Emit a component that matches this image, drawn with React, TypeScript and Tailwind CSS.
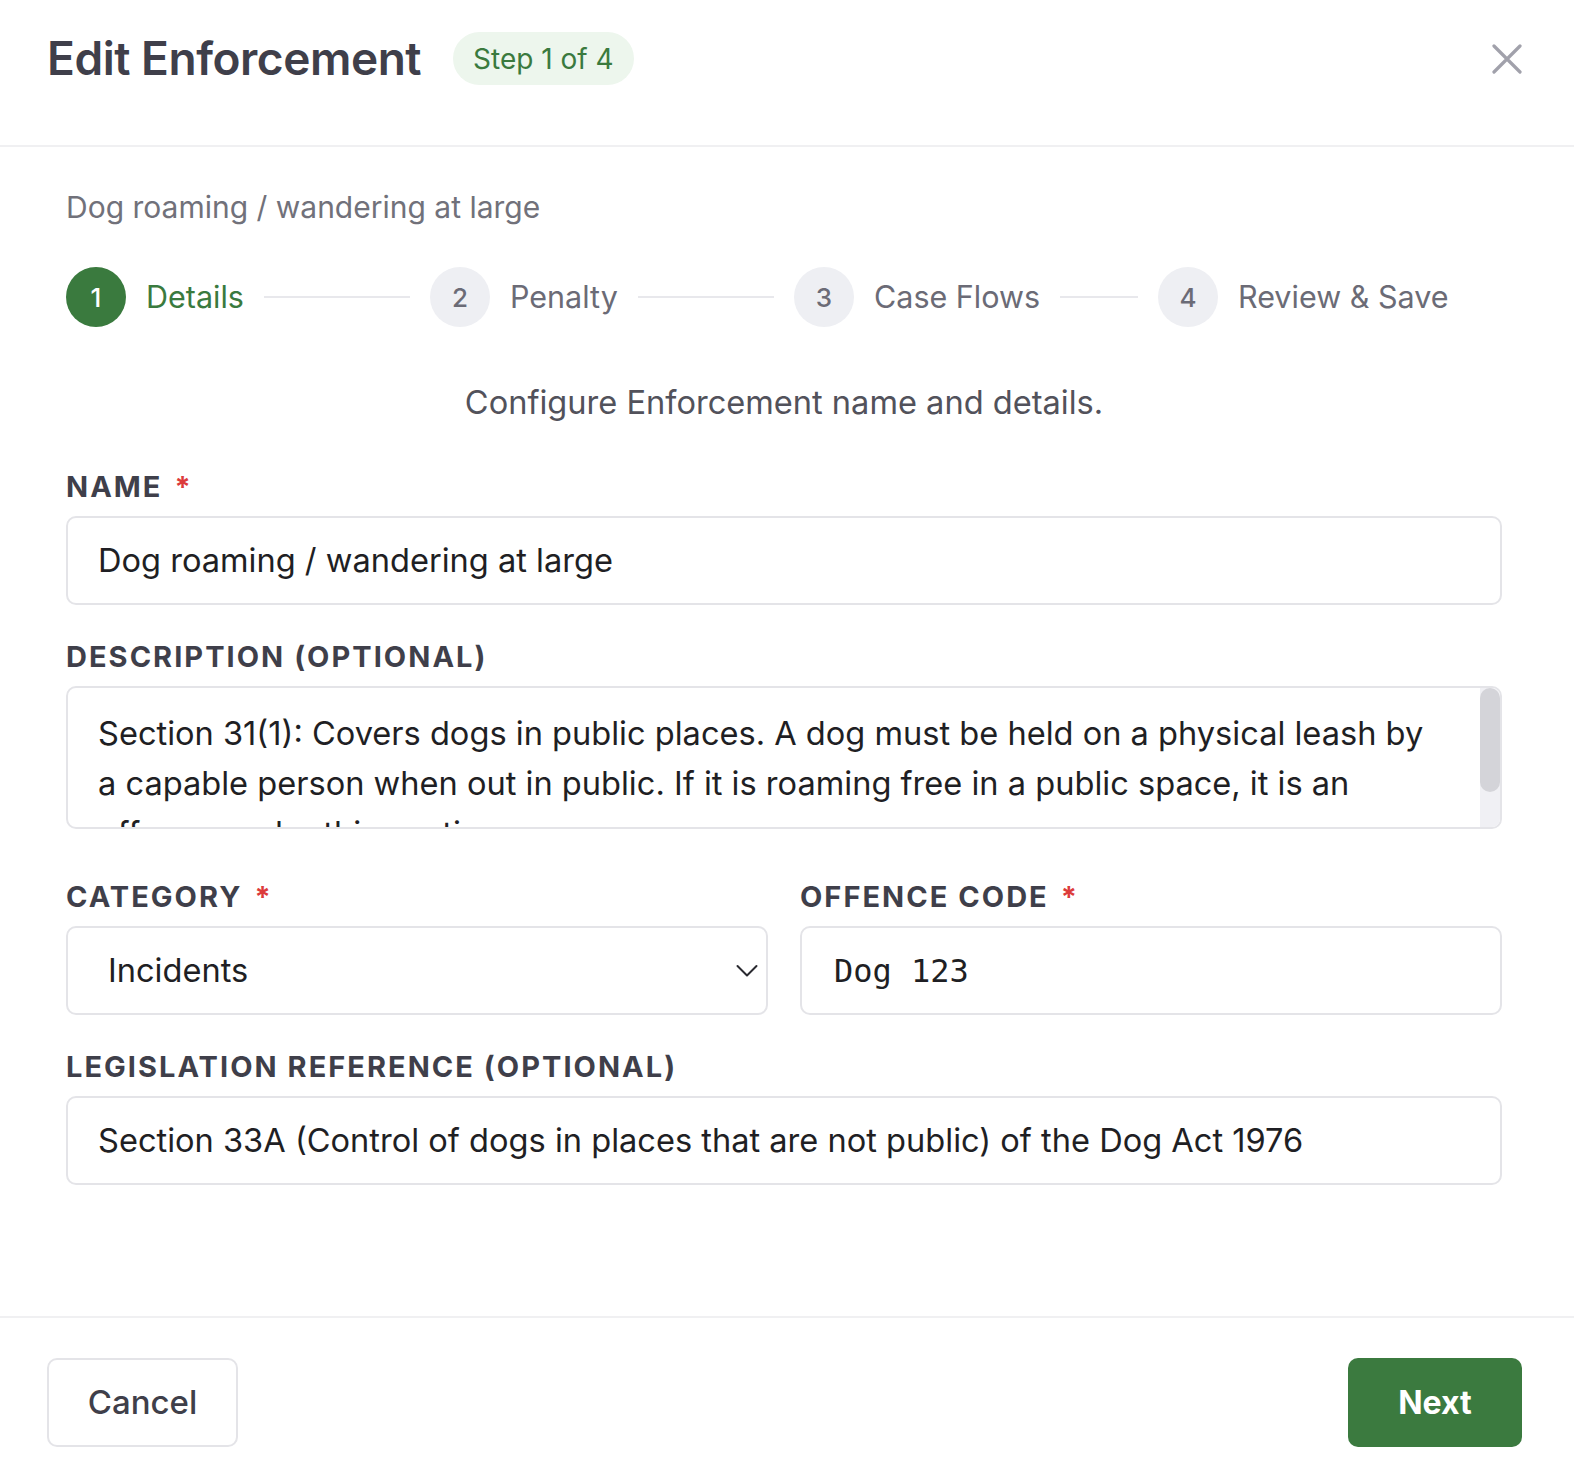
const steps = [
  { n: 1, label: "Details" },
  { n: 2, label: "Penalty" },
  { n: 3, label: "Case Flows" },
  { n: 4, label: "Review & Save" },
];

const descLines = [
  "Section 31(1): Covers dogs in public places. A dog must be held on a physical leash by",
  "a capable person when out in public. If it is roaming free in a public space, it is an",
  "offence under this section.",
];

const FieldLabel = ({ text, required }: { text: string; required?: boolean }) => (
  <div className="h-[36px] flex items-center text-[29px] font-bold tracking-[0.07em] text-[#3f3f4a] uppercase">
    {text}
    {required && <span className="ml-3 text-[#dc3b3b]">*</span>}
  </div>
);

const App = () => {
  return (
    <div
      className="w-[1574px] h-[1480px] flex flex-col bg-white"
      style={{ fontFamily: "Inter, 'Noto Sans', sans-serif" }}
    >
      {/* header */}
      <div className="h-[147px] shrink-0 flex items-center pl-[47px] pr-[52px] border-b-2 border-[#f0f0f2]">
        <div className="text-[46px] font-semibold text-[#3f3f4a] tracking-[-0.01em] -mt-[28px]">Edit Enforcement</div>
        <div className="ml-[32px] -mt-[28px] h-[53px] px-[20px] rounded-full bg-[#edf6ed] text-[#3a7a3e] text-[28px] flex items-center">
          Step 1 of 4
        </div>
        <div className="ml-auto -mt-[28px]">
          <svg width="30" height="30" viewBox="0 0 30 30" fill="none" stroke="#a1a1ab" strokeWidth="3.2" strokeLinecap="round">
            <path d="M2 2 L28 28 M28 2 L2 28" />
          </svg>
        </div>
      </div>

      {/* body */}
      <div className="flex-1 pl-[66px] pr-[72px]">
        <div className="mt-[40px] h-[40px] flex items-center text-[30px] text-[#71717a]">
          Dog roaming / wandering at large
        </div>

        <div className="mt-[40px] h-[60px] flex gap-5">
          {steps.map((s, i) => {
            const active = i === 0;
            return (
              <div key={s.n} className="flex-1 flex items-center">
                <div
                  className={
                    active
                      ? "w-[60px] h-[60px] shrink-0 rounded-full bg-[#3a7a3e] text-white text-[26px] font-medium flex items-center justify-center"
                      : "w-[60px] h-[60px] shrink-0 rounded-full bg-[#eeeff3] text-[#6b6b76] text-[26px] font-medium flex items-center justify-center"
                  }
                >
                  {s.n}
                </div>
                <div
                  className={
                    active
                      ? "ml-5 text-[30.5px] text-[#3a7a3e] whitespace-nowrap"
                      : "ml-5 text-[30.5px] text-[#6b6b76] whitespace-nowrap"
                  }
                >
                  {s.label}
                </div>
                {i < steps.length - 1 && <div className="ml-5 flex-1 h-[2px] bg-[#e8e8ec]" />}
              </div>
            );
          })}
        </div>

        <div className="mt-[55px] h-[40px] flex items-center justify-center text-[32.6px] text-[#52525b]">
          Configure Enforcement name and details.
        </div>

        <div className="mt-[47px]">
          <FieldLabel text="Name" required />
        </div>
        <div className="mt-[11px] h-[89px] border-2 border-[#e4e4e8] rounded-[10px] flex items-center px-[30px] text-[32.6px] text-[#1f1f24]">
          Dog roaming / wandering at large
        </div>

        <div className="mt-[34px]">
          <FieldLabel text="Description (Optional)" />
        </div>
        <div className="mt-[11px] h-[143px] border-2 border-[#e4e4e8] rounded-[10px] flex overflow-hidden">
          <div className="flex-1 pl-[30px] pt-[20px] text-[32.6px] leading-[50px] text-[#1f1f24] whitespace-nowrap overflow-hidden">
            {descLines.map((l, i) => (
              <div key={i}>{l}</div>
            ))}
          </div>
          <div className="w-[20px] shrink-0 bg-[#f0f0f4]">
            <div className="h-[104px] bg-[#d4d4d9] rounded-full" />
          </div>
        </div>

        <div className="mt-[50px] grid grid-cols-2 gap-8">
          <div>
            <FieldLabel text="Category" required />
            <div className="mt-[11px] h-[89px] border-2 border-[#e4e4e8] rounded-[10px] flex items-center pl-[40px] pr-[8px] text-[32.6px] text-[#1f1f24]">
              Incidents
              <svg className="ml-auto" width="22" height="14" viewBox="0 0 22 14" fill="none" stroke="#2a2a30" strokeWidth="2" strokeLinecap="round" strokeLinejoin="round">
                <path d="M1.5 2 L11 11.5 L20.5 2" />
              </svg>
            </div>
          </div>
          <div>
            <FieldLabel text="Offence Code" required />
            <div
              className="mt-[11px] h-[89px] border-2 border-[#e4e4e8] rounded-[10px] flex items-center px-[32px] text-[32px] text-[#1f1f24]"
              style={{ fontFamily: "'DejaVu Sans Mono', 'Liberation Mono', monospace" }}
            >
              Dog 123
            </div>
          </div>
        </div>

        <div className="mt-[34px]">
          <FieldLabel text="Legislation Reference (Optional)" />
        </div>
        <div className="mt-[11px] h-[89px] border-2 border-[#e4e4e8] rounded-[10px] flex items-center px-[30px] text-[32.6px] text-[#1f1f24]">
          Section 33A (Control of dogs in places that are not public) of the Dog Act 1976
        </div>
      </div>

      {/* footer */}
      <div className="h-[164px] shrink-0 border-t-2 border-[#f0f0f2] flex items-start justify-between pl-[47px] pr-[52px] pt-[40px]">
        <button className="w-[191px] h-[89px] border-2 border-[#e4e4e8] rounded-[10px] text-[33px] font-medium text-[#3f3f4a]">
          Cancel
        </button>
        <button className="w-[174px] h-[89px] rounded-[10px] bg-[#3b7a3f] text-[32px] font-bold text-white">
          Next
        </button>
      </div>
    </div>
  );
};

export default App;
